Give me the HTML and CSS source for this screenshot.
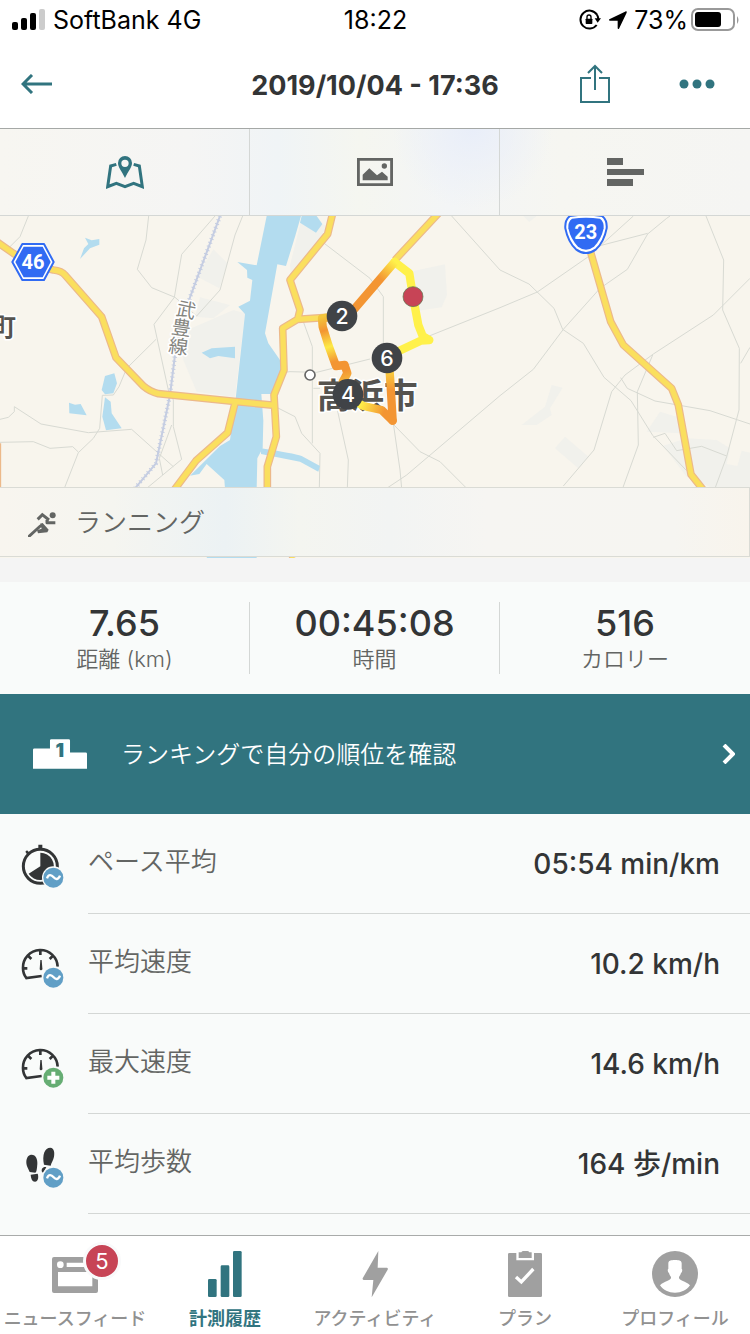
FILE: index.html
```html
<!DOCTYPE html>
<html lang="ja">

<head>
    <meta charset="UTF-8" />
    <meta name="viewport" content="width=device-width, initial-scale=1.0" />
    <title>2019/10/04 - 17:36</title>
    <link rel="stylesheet" href="styles.css">
</head>

<body>
    <div class="status-bar">
        <div class="status-left">
            <svg width="34" height="22" viewBox="0 0 34 22">
                <rect x="0" y="13" width="6" height="8" rx="2" />
                <rect x="9" y="9" width="6" height="12" rx="2" />
                <rect x="18" y="4" width="6" height="17" rx="2" />
                <rect x="27" y="0" width="6" height="21" rx="2" fill="#ccc" />
            </svg>
            <span>SoftBank</span>
            <span>4G</span>
        </div>
        <time>18:22</time>
        <div class="status-right">
            <svg width="22" height="22" viewBox="0 0 66 66">
                <path d="M54 17A27 27 0 1 0 53 48M58 32A27 27 0 0 0 54 17" fill="none" stroke="#000" stroke-width="6" />
                <path d="M47 28h19L56 41z" />
                <rect x="20" y="29" width="20" height="16" rx="2" />
                <path d="M24 30v-6a6 6 0 0 1 12 0v6" fill="none" stroke="#000" stroke-width="4" />
            </svg>
            <svg width="19" height="19" viewBox="0 0 57 57">
                <path d="M55 1Q57 2 56 5L33 53Q30 56 29 52V29H5Q1 28 4 25L51 2Q53 0 55 1z" />
            </svg>
            <span>73%</span>
            <svg width="48" height="24" viewBox="0 0 48 24">
                <rect x="1" y="1" width="42" height="21" rx="6" fill="none" stroke="#999" stroke-width="2" />
                <rect x="4" y="4" width="26" height="15" rx="3" />
                <path d="M46 8q3 4 0 8z" fill="#999" />
            </svg>
        </div>
    </div>

    <header class="header">
        <button type="button" class="icon-btn" aria-label="戻る">
            <svg width="31" height="20" viewBox="0 0 31 20">
                <path d="M31 10H3M11 1L2 10l9 9" fill="none" stroke="currentColor" stroke-width="3" />
            </svg>
        </button>
        <h1>2019/10/04 - 17:36</h1>
        <div class="header-actions">
            <button type="button" class="icon-btn" aria-label="共有">
                <svg width="30" height="40" viewBox="0 0 30 40">
                    <path d="M11 14H1v24h28V14H19M15 26V2M8 9l7-7 7 7" fill="none" stroke="currentColor" stroke-width="2" />
                </svg>
            </button>
            <button type="button" class="icon-btn" aria-label="メニュー">
                <svg width="36" height="10" viewBox="0 0 36 10">
                    <circle cx="5" cy="5" r="4.5" />
                    <circle cx="18" cy="5" r="4.5" />
                    <circle cx="31" cy="5" r="4.5" />
                </svg>
            </button>
        </div>
    </header>

    <div class="tabs">
        <button type="button" class="tab active" aria-label="マップ">
            <svg width="38" height="33" viewBox="0 0 114 99">
                <path d="M31 25L14 30 5 92l26-10 26 10 26-10 26 10-9-62-17-5" fill="none" stroke="currentColor" stroke-width="9" />
                <path fill-rule="evenodd" d="M57 0a21 21 0 0 1 21 21c0 14-12 25-21 45C48 46 36 35 36 21A21 21 0 0 1 57 0zm0 11a11 11 0 1 0 0 22 11 11 0 0 0 0-22z" />
            </svg>
        </button>
        <button type="button" class="tab" aria-label="写真">
            <svg width="36" height="28" viewBox="0 0 108 84">
                <path d="M4 4h100v76H4z" fill="none" stroke="currentColor" stroke-width="9" />
                <path d="M17 67V50l20-19 23 21 15-11 17 15v11z" />
                <circle cx="82" cy="24" r="8" />
            </svg>
        </button>
        <button type="button" class="tab" aria-label="ラップ">
            <svg width="37" height="28" viewBox="0 0 37 28">
                <path d="M0 0h16v7H0zM0 11h37v6H0zM0 21h26v7H0z" />
            </svg>
        </button>
    </div>

    <main>
        <section class="map">
            <svg class="map-canvas" viewBox="0 18 2250 1026" preserveAspectRatio="xMidYMin slice">
                <defs>
                    <linearGradient id="legTop" gradientUnits="userSpaceOnUse" x1="1060" y1="300" x2="1185" y2="155">
                        <stop offset=".65" stop-color="#f39533" />
                        <stop offset="1" stop-color="#fff14a" />
                    </linearGradient>
                    <linearGradient id="legLeft" gradientUnits="userSpaceOnUse" x1="968" y1="320" x2="1030" y2="515">
                        <stop offset="0" stop-color="#f3c63c" />
                        <stop offset=".2" stop-color="#f39533" />
                        <stop offset=".45" stop-color="#fdea46" />
                        <stop offset=".68" stop-color="#f39533" />
                        <stop offset=".85" stop-color="#f39533" />
                        <stop offset="1" stop-color="#f6b53a" />
                    </linearGradient>
                    <linearGradient id="legBottom" gradientUnits="userSpaceOnUse" x1="1080" y1="580" x2="1150" y2="610">
                        <stop offset="0" stop-color="#fff14a" />
                        <stop offset="1" stop-color="#f39533" />
                    </linearGradient>
                    <linearGradient id="legRight" gradientUnits="userSpaceOnUse" x1="0" y1="490" x2="0" y2="540">
                        <stop offset="0" stop-color="#f9c83e" />
                        <stop offset="1" stop-color="#f39533" />
                    </linearGradient>
                </defs>

                <!-- built-up areas -->
                <g fill="#f1f1ec">
                    <path d="M550 365L700 300 735 310 705 562 590 545 550 450z" />
                    <path d="M640 118L682 160 658 235 592 200zM600 262L690 285 640 325 585 320z" />
                    <path d="M870 165L905 25 975 45 975 75 872 200z" />
                    <path d="M1240 183L1335 163 1341 255 1325 292 1255 302z" />
                    <path d="M1655 525L1688 533 1650 595 1655 615 1610 645 1565 645 1635 590zM1695 680L1765 740 1735 775 1665 715z" />
                    <path d="M1940 665L1980 605 2030 620 2045 670zM1990 707L2060 685 2150 690 2190 715 2180 762 2212 768 2225 722 2250 728V840H2150L2060 800z" />
                    <path d="M1570 18h40l-22 18z" />
                </g>

                <!-- minor roads -->
                <g class="minor">
                    <path d="M85 18L60 80 25 115M446 18L438 90 412 178 455 233 525 262 590 318 660 240 705 75 728 18M645 18L545 133 523 262 462 343 505 540 520 570 520 650 545 748 440 835" />
                    <path d="M468 388L380 475 357 530 340 555 307 556 299 655 280 685 235 728 193 835M0 628L25 622 43 605V590L123 642 265 668 395 658 520 770M0 697L100 695 150 715 218 710 235 726M515 645L478 745 488 795" />
                    <path d="M970 98L1110 205 1150 260V400M1355 18L1500 180 1587 222 1662 295 1688 358 1750 400 1812 502 1893 572 1958 676 2060 782M910 335L937 410V700M830 490L870 485 950 487 1110 447M940 535H960M832 593L885 620 905 670 960 730 958 835M1010 590L1045 750 1042 835M1180 640L1200 780 1205 835M1182 645L1260 725 1320 755 1400 835" />
                    <path d="M1270 385L1500 293 1612 246 1765 140 1900 18M1160 835L1220 795 1500 557 1600 478 1690 358 1800 235 1882 178 1943 72 2000 25 2010 18M1800 107L1943 70M2118 18L2171 150 2168 300 2218 415 2217 600 2180 740 2145 835M2250 205L2140 315 1960 432 1875 495 1835 545 1782 720 1690 828M1958 435L1912 545 1915 705 1868 835M1862 503L1882 535 1965 573 2130 602 2250 642M2222 460L2250 412M1960 682L1995 670 2030 722 2105 709 2180 738" />
                </g>

                <!-- water -->
                <g fill="#b3dcef">
                    <path d="M800 18H903L885 80 858 168 832 163 795 370 805 400 840 450 850 475 822 552H784L790 632 788 715 772 745 770 835 770 1044H620L675 835 673 810 620 762 598 792 570 797 660 708 690 690 706 575 735 312 715 290 750 272 757 210 742 203 741 180 712 156 770 166z" />
                    <path d="M905 18H950L967 42 948 68 900 38z" />
                    <path d="M255 83l20 8 23-4v17l-28 11-30 32 12-32 13-13zM315 498l28-8 8 30-11 30-25 3-10-13zM315 562l17 13 3 35 30 45-47 6-11-41zM207 578l18 6 17-2 18 34-52-6zM605 428l30-13 70-5v35l-50-7-25 7z" />
                    <path d="M783 715Q880 730 905 738L960 768 955 785 900 755 783 732z" />
                </g>

                <!-- railway -->
                <path class="rail" d="M660 18L630 100 570 262 525 435 510 555 468 760 405 835" />
                <path class="rail-ties" d="M660 18L630 100 570 262 525 435 510 555 468 760 405 835" />

                <!-- main roads -->
                <g class="road road-edge">
                    <path d="M-20 88L40 130 100 165 160 180 Q185 182 195 195L305 320 348 443 430 528Q450 545 475 551L710 575 825 586M706 575L683 668 588 752 500 870M998 10L983 72 870 210 900 300 893 328 848 355 852 480 822 555 829 680 802 770V870L880 1044M893 328L980 322M1320 5L1185 150M1770 120L1832 335 1870 405 2015 535 2035 585 2073 793 2130 865M-8 700V835" />
                </g>
                <g class="road">
                    <path d="M-20 88L40 130 100 165 160 180 Q185 182 195 195L305 320 348 443 430 528Q450 545 475 551L710 575 825 586M706 575L683 668 588 752 500 870M998 10L983 72 870 210 900 300 893 328 848 355 852 480 822 555 829 680 802 770V870L880 1044M893 328L980 322M1320 5L1185 150M1770 120L1832 335 1870 405 2015 535 2035 585 2073 793 2130 865M-8 700V835" />
                </g>

                <!-- place names -->
                <text class="place" x="-26" y="377" font-size="74">町</text>
                <circle cx="930" cy="495" r="15" fill="#fff" stroke="#666" stroke-width="5" />
                <text class="place" x="950" y="594" font-size="101">高浜市</text>
                <g class="station" text-anchor="middle">
                    <text transform="translate(554 320) rotate(12)">武</text>
                    <text transform="translate(541 374) rotate(8)">豊</text>
                    <text transform="translate(532 430) rotate(8)">線</text>
                </g>

                <!-- route signs -->
                <path d="M67 102H132L161 156 132 210H67L37 156z" fill="#fff" stroke="#316bf3" stroke-width="6" stroke-linejoin="round" />
                <path d="M71 110H128L152 156 128 202H71L46 156z" fill="#316bf3" />
                <text class="sign" x="99" y="177">46</text>
                <path d="M1710 18Q1758 10 1806 18 1822 30 1820 55 1812 95 1788 118 1758 140 1728 118 1704 95 1696 55 1694 30 1710 18z" fill="#fff" stroke="#316bf3" stroke-width="6" />
                <path d="M1716 26Q1758 20 1800 26 1813 36 1811 55 1804 88 1782 110 1758 128 1734 110 1712 88 1705 55 1703 36 1716 26z" fill="#316bf3" />
                <text class="sign" x="1757" y="87">23</text>

                <!-- recorded route -->
                <g class="route">
                    <path d="M1184 156L1228 190 1239 260 1255 345 1268 378 1288 390 1262 392 1160 440" stroke="#fff14a" />
                    <path d="M1045 318L1184 156" stroke="url(#legTop)" />
                    <path d="M1000 320L966 325 968 350 985 405 1008 468 1034 465 1042 490 1028 515" stroke="url(#legLeft)" />
                    <path d="M1060 570L1090 588 1145 600 1178 632" stroke="url(#legBottom)" />
                    <path d="M1168 470L1172 530 1178 632" stroke="url(#legRight)" />
                </g>
                <circle cx="1239" cy="260" r="30" fill="#c74456" stroke="#54794f" stroke-width="2" />
                <g class="marker">
                    <circle cx="1026" cy="318" r="46" />
                    <circle cx="1161" cy="444" r="46" />
                    <circle cx="1044" cy="553" r="46" />
                    <text x="1026" y="341">2</text>
                    <text x="1161" y="467">6</text>
                    <text x="1044" y="576">4</text>
                </g>
            </svg>
            <div class="activity">
                <svg width="29" height="26" viewBox="0 0 87 78">
                    <g fill="none" stroke="currentColor" stroke-width="9">
                        <path d="M29 25L43 11l20 16" />
                        <path d="M57 27v8h25" stroke-linejoin="round" />
                        <path d="M4 75L37 45" stroke-linecap="round" />
                    </g>
                    <path d="M36 38l8-2 18 20-4 8-28 3-3-9 14-5z" />
                    <circle cx="74" cy="13" r="9" />
                </svg>
                <span>ランニング</span>
            </div>
        </section>

        <section class="stats">
            <div class="stat">
                <strong>7.65</strong>
                <span>距離 (km)</span>
            </div>
            <div class="stat">
                <strong>00:45:08</strong>
                <span>時間</span>
            </div>
            <div class="stat">
                <strong>516</strong>
                <span>カロリー</span>
            </div>
        </section>

        <a class="ranking" href="#ranking">
            <svg width="54" height="30" viewBox="0 0 159 87">
                <path fill="#fff" fill-rule="evenodd" d="M0 87V31q0-4 4-4h46V4q0-4 4-4h51q4 0 4 4v35h46q4 0 4 4v44z" />
                <text x="79" y="53">1</text>
            </svg>
            <span class="ranking-text">ランキングで自分の順位を確認</span>
            <svg width="13" height="20" viewBox="0 0 13 20">
                <path d="M2 1l9 9-9 9" fill="none" stroke="#fff" stroke-width="4" />
            </svg>
        </a>

        <ul class="details">
            <li>
                <svg width="44" height="48" viewBox="0 0 132 144">
                    <circle cx="58" cy="79" r="51" fill="none" stroke="#333536" stroke-width="9" />
                    <path d="M52 14h12v14H52zM13 35l5-4 10 9-7 7z" />
                    <path d="M58 38A41 41 0 1 1 23 101L58 79z" />
                    <circle cx="97" cy="113" r="34" fill="#f9fbfa" />
                    <circle cx="97" cy="113" r="30" fill="#619fc6" />
                    <path d="M78 115C83 100 92 105 98 112S112 120 117 107" fill="none" stroke="#fff" stroke-width="7" />
                </svg>
                <div class="detail">
                    <span>ペース平均</span>
                    <b>05:54 min/km</b>
                </div>
            </li>
            <li>
                <svg width="44" height="48" viewBox="0 0 132 144">
                    <path d="M62 108L16 114C8 104 6 94 6 84A52 52 0 0 1 110 80M58 33v12M10 85h9M22 48l9 9M95 48l-9 9" fill="none" stroke="#333536" stroke-width="8" />
                    <path d="M58 60h4l2 24a4 4 0 0 1-8 4z" />
                    <circle cx="97" cy="113" r="34" fill="#f9fbfa" />
                    <circle cx="97" cy="113" r="30" fill="#619fc6" />
                    <path d="M78 115C83 100 92 105 98 112S112 120 117 107" fill="none" stroke="#fff" stroke-width="7" />
                </svg>
                <div class="detail">
                    <span>平均速度</span>
                    <b>10.2 km/h</b>
                </div>
            </li>
            <li>
                <svg width="44" height="48" viewBox="0 0 132 144">
                    <path d="M62 108L16 114C8 104 6 94 6 84A52 52 0 0 1 110 80M58 33v12M10 85h9M22 48l9 9M95 48l-9 9" fill="none" stroke="#333536" stroke-width="8" />
                    <path d="M58 60h4l2 24a4 4 0 0 1-8 4z" />
                    <circle cx="97" cy="113" r="34" fill="#f9fbfa" />
                    <circle cx="97" cy="113" r="30" fill="#66ad73" />
                    <path d="M97 95v36M79 113h36" stroke="#fff" stroke-width="12" />
                </svg>
                <div class="detail">
                    <span>最大速度</span>
                    <b>14.6 km/h</b>
                </div>
            </li>
            <li>
                <svg width="44" height="48" viewBox="0 0 132 144">
                    <path d="M30 44C45 43 50 58 49 72 48 85 47 97 43 98L26 96C22 86 15 77 16 64 17 53 22 45 30 44zM29 104l21-3c3 8 3 23-8 24-9 0-12-10-13-21z" />
                    <path d="M88 23c12 1 13 15 11 27-2 11-8 17-10 27l-20-3c-3-13-3-26 1-37 3-8 10-14 18-14zM63 86c4-5 8-6 13-4L66 98c-4-2-5-7-3-12z" />
                    <circle cx="97" cy="113" r="34" fill="#f9fbfa" />
                    <circle cx="97" cy="113" r="30" fill="#619fc6" />
                    <path d="M78 115C83 100 92 105 98 112S112 120 117 107" fill="none" stroke="#fff" stroke-width="7" />
                </svg>
                <div class="detail">
                    <span>平均歩数</span>
                    <b>164 歩/min</b>
                </div>
            </li>
        </ul>
    </main>

    <nav class="nav">
        <a href="#news">
            <span class="nav-icon">
                <svg width="46" height="46" viewBox="0 0 138 138">
                    <path fill-rule="evenodd" d="M6 18H132q6 0 6 6V120q0 6-6 6H6q-6 0-6-6V24q0-6 6-6zM18 63V106H121V63zM44 35V48H121V35z" />
                    <circle cx="25" cy="41" r="10" fill="#fff" />
                </svg>
                <span class="badge">5</span>
            </span>
            <span class="nav-label">ニュースフィード</span>
        </a>
        <a href="#history" class="active">
            <svg width="46" height="46" viewBox="0 0 138 138">
                <rect x="18" y="84" width="26" height="54" rx="4" />
                <rect x="56" y="43" width="26" height="95" rx="4" />
                <rect x="93" y="0" width="26" height="138" rx="4" />
            </svg>
            <span class="nav-label">計測履歴</span>
        </a>
        <a href="#activity">
            <svg width="46" height="46" viewBox="0 0 138 138">
                <path d="M79 0L77 50H105q4 2 2 6L59 139 64 87H35q-4-1-3-5z" />
            </svg>
            <span class="nav-label">アクティビティ</span>
        </a>
        <a href="#plan">
            <svg width="46" height="46" viewBox="0 0 138 138">
                <path fill-rule="evenodd" d="M22 6H43V28H96V6H116q4 0 4 4V134q0 4-4 4H22q-4 0-4-4V10q0-4 4-4z" />
                <path d="M50 4H58Q60 0 64 0H76Q80 0 82 4H89V21H50z" />
                <path d="M42 78L58 93 94 54" fill="none" stroke="#fff" stroke-width="10" />
            </svg>
            <span class="nav-label">プラン</span>
        </a>
        <a href="#profile">
            <svg width="46" height="46" viewBox="0 0 138 138">
                <circle cx="69" cy="69" r="69" />
                <path d="M69 27c13 0 20 2 20 10v17c3 0 2 10-2 12-1 6-5 9-6 13-1 11 20 11 33 24-10 15-26 22-45 22s-35-7-45-22c13-13 34-13 33-24-1-4-5-7-6-13-4-2-5-12-2-12V37c0-8 7-10 20-10z" fill="#fff" />
            </svg>
            <span class="nav-label">プロフィール</span>
        </a>
    </nav>
</body>

</html>
```
FILE: styles.css
```css
:root {
    --primary-color: #31747f;
    --text-color: #333536;
    --subtext-color: #636563;
    --nav-color: #a0a0a0;
    --line-color: #d4d7d5;
    --bg-color: #f9fbfa;
}

* {
    box-sizing: border-box;
}

body {
    margin: 0;
    min-height: 100vh;
    display: flex;
    flex-direction: column;
    font-family: Inter, 'Noto Sans CJK JP', sans-serif;
    background: #fff;
    color: var(--text-color);
}

button {
    padding: 0;
    border: none;
    background: none;
    color: inherit;
    cursor: pointer;
}

a {
    text-decoration: none;
}

svg {
    display: block;
    flex-shrink: 0;
    fill: currentColor;
}

/* status bar */

.status-bar {
    display: grid;
    grid-template-columns: 1fr auto 1fr;
    align-items: center;
    height: 40px;
    padding: 0 11px 0 12px;
    font-size: 25px;
    color: #000;
}

.status-left,
.status-right {
    display: flex;
    align-items: center;
    gap: 7px;
}

.status-right {
    justify-content: flex-end;
}

.status-right svg:last-child {
    margin-left: -4px;
}

/* header */

.header {
    display: grid;
    grid-template-columns: 1fr auto 1fr;
    align-items: center;
    height: 89px;
    padding: 0 21px;
    border-bottom: 1px solid #a5a8a6;
}

.header h1 {
    margin: 0;
    padding-top: 3px;
    font-size: 27px;
    font-weight: 700;
}

.icon-btn {
    justify-self: start;
    color: var(--primary-color);
}

.header-actions {
    display: flex;
    justify-content: flex-end;
    align-items: center;
    gap: 69px;
    margin-right: 14px;
}

/* tabs */

.tabs {
    display: grid;
    grid-template-columns: repeat(3, 1fr);
    height: 87px;
    border-bottom: 1px solid var(--line-color);
    background:
        radial-gradient(circle at 63% 0, #e9eef9, rgba(233, 238, 249, 0) 80px),
        linear-gradient(90deg, #f7f6f1, #f5f5f4 25%, #f0f4f6 37%, #f5f6f0 48%, #f3f5f6 60%, #f6f6f1 75%, #f5f5f3);
}

.tab {
    display: flex;
    justify-content: center;
    align-items: center;
    border-right: 1px solid var(--line-color);
    color: var(--subtext-color);
}

.tab:last-child {
    border-right: none;
}

.tab.active {
    color: var(--primary-color);
}

/* map */

main {
    flex: 1;
    background: var(--bg-color);
}

.map {
    position: relative;
    height: 342px;
    background: #f8f5ed;
    overflow: hidden;
}

.map-canvas {
    width: 100%;
    height: 100%;
}

.minor {
    fill: none;
    stroke: #d8dad3;
    stroke-width: 3;
}

.rail {
    fill: none;
    stroke: #c5cde2;
    stroke-width: 6;
}

.rail-ties {
    fill: none;
    stroke: #c5cde2;
    stroke-width: 13;
    stroke-dasharray: 3 9;
}

.road {
    fill: none;
    stroke: #fadf5e;
    stroke-width: 16;
    stroke-linejoin: round;
}

.road-edge {
    stroke: #ecb98a;
    stroke-width: 23;
}

.place,
.station {
    font-family: 'Noto Sans CJK JP', sans-serif;
    fill: #55534f;
    stroke: #fff;
    stroke-width: 10;
    stroke-linejoin: round;
    paint-order: stroke;
}

.place {
    font-weight: 700;
}

.station {
    font-size: 58px;
    fill: #85857f;
}

.sign {
    font-family: Roboto, sans-serif;
    font-size: 60px;
    font-weight: 700;
    text-anchor: middle;
    fill: #fff;
}

.route {
    fill: none;
    stroke-width: 25;
    stroke-linecap: round;
    stroke-linejoin: round;
}

.marker {
    fill: #404347;
}

.marker text {
    font-size: 64px;
    font-weight: 500;
    text-anchor: middle;
    fill: #fff;
}

.activity {
    position: absolute;
    left: 0;
    right: 0;
    bottom: 1px;
    display: flex;
    align-items: center;
    gap: 18px;
    height: 70px;
    padding-left: 28px;
    border: 1px solid #dadbd5;
    border-left: none;
    background: linear-gradient(90deg, #f8f5ef, #f5f5f0 15%, #ecf2f4 30%, #f4f5f0 40%, #f2f4f3 52%, #f6f5f2 65%, #f6f5f1 90%, #f8f4ec);
    font-size: 26px;
    font-weight: 350;
    color: var(--subtext-color);
}

.activity svg {
    margin-top: 4px;
}

.activity span {
    padding-bottom: 4px;
}

/* totals */

.stats {
    display: grid;
    grid-template-columns: repeat(3, 1fr);
    padding: 20px 0;
    border-top: 24px solid #f4f4f4;
}

.stat {
    display: flex;
    flex-direction: column;
    align-items: center;
    height: 72px;
    border-right: 1px solid var(--line-color);
}

.stat:last-child {
    border-right: none;
}

.stat strong {
    font-size: 36px;
    font-weight: 500;
    line-height: 42px;
}

.stat span {
    font-size: 22px;
    font-weight: 350;
    line-height: 30px;
    color: var(--subtext-color);
}

/* ranking */

.ranking {
    display: flex;
    align-items: center;
    height: 120px;
    padding: 0 15px 0 33px;
    background: var(--primary-color);
    color: #fff;
}

.ranking text {
    font-size: 56px;
    font-weight: 900;
    text-anchor: middle;
    fill: var(--primary-color);
}

.ranking-text {
    flex: 1;
    margin-left: 34px;
    padding-bottom: 4px;
    font-size: 24px;
    font-weight: 350;
}

/* details */

.details {
    margin: 0;
    padding: 0 0 21px;
    list-style: none;
}

.details li {
    display: flex;
    align-items: center;
    gap: 23px;
    padding-left: 21px;
}

.detail {
    flex: 1;
    display: flex;
    justify-content: space-between;
    align-items: center;
    height: 100px;
    padding-right: 30px;
    border-bottom: 1px solid var(--line-color);
    line-height: 40px;
}

.detail span {
    padding-bottom: 4px;
    font-size: 26px;
    font-weight: 350;
    color: var(--subtext-color);
}

.detail b {
    font-size: 28px;
    font-weight: 500;
}

/* bottom navigation */

.nav {
    display: grid;
    grid-template-columns: repeat(5, 1fr);
    padding: 15px 0 2px;
    border-top: 1px solid #a9abaa;
}

.nav a {
    display: flex;
    flex-direction: column;
    align-items: center;
    gap: 9px;
    color: var(--nav-color);
}

.nav a.active {
    color: var(--primary-color);
}

.nav-label {
    font-size: 18px;
    font-weight: 500;
    line-height: 26px;
    white-space: nowrap;
    color: #919191;
}

.active .nav-label {
    font-weight: 700;
    color: var(--primary-color);
}

.nav-icon {
    position: relative;
}

.badge {
    position: absolute;
    top: -9px;
    left: 31px;
    width: 38px;
    height: 38px;
    border: 3px solid #f9fafb;
    border-radius: 50%;
    background: #c74456;
    font-size: 22px;
    font-weight: 400;
    line-height: 32px;
    text-align: center;
    color: #fff;
}
```
